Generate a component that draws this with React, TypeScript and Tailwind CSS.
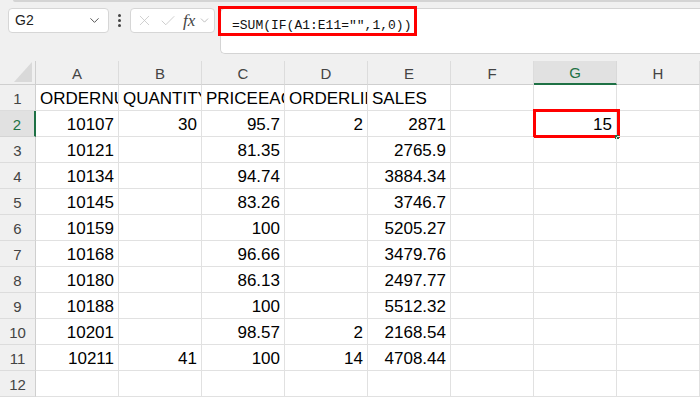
import { ChevronDown, X, Check } from "lucide-react";

// Sheet data, 12 rows x 8 columns (A..H)
const COLS = ["A", "B", "C", "D", "E", "F", "G", "H"];

type Cell = string | number | "";

const ROWS: Cell[][] = [
  ["ORDERNUMBER", "QUANTITYORDERED", "PRICEEACH", "ORDERLINENUMBER", "SALES", "", "", ""],
  [10107, 30, 95.7, 2, 2871, "", 15, ""],
  [10121, "", 81.35, "", 2765.9, "", "", ""],
  [10134, "", 94.74, "", 3884.34, "", "", ""],
  [10145, "", 83.26, "", 3746.7, "", "", ""],
  [10159, "", 100, "", 5205.27, "", "", ""],
  [10168, "", 96.66, "", 3479.76, "", "", ""],
  [10180, "", 86.13, "", 2497.77, "", "", ""],
  [10188, "", 100, "", 5512.32, "", "", ""],
  [10201, "", 98.57, 2, 2168.54, "", "", ""],
  [10211, 41, 100, 14, 4708.44, "", "", ""],
  ["", "", "", "", "", "", "", ""],
];

function FormulaBar() {
  return (
    <div className="relative h-[61px] bg-[#f0f0f0]">
      <div className="ml-[13px] h-[2px] bg-[#d4d4d4] rounded-bl" />
      <div className="flex items-start pt-[6px] pl-[8px]">
        {/* name box */}
        <div className="flex items-center justify-between w-[101px] h-[25px] bg-white border border-[#d6d6d6] rounded-[4px] pl-[6px] pr-[6px]">
          <span className="text-[14px] text-[#222]">G2</span>
          <ChevronDown size={15} strokeWidth={1.6} className="text-[#555]" />
        </div>
        {/* vertical dots */}
        <div className="flex flex-col items-center justify-center gap-[2px] w-[21px] h-[25px]">
          <span className="w-[3px] h-[3px] bg-[#444] rounded-full" />
          <span className="w-[3px] h-[3px] bg-[#444] rounded-full" />
          <span className="w-[3px] h-[3px] bg-[#444] rounded-full" />
        </div>
        {/* cancel / enter / fx */}
        <div className="flex items-center w-[85px] h-[25px] bg-white border border-[#d6d6d6] rounded-[4px] pl-[5px]">
          <X size={17} strokeWidth={1.1} className="text-[#c4c4c4]" />
          <Check size={18} strokeWidth={1.1} className="text-[#c4c4c4] ml-[6px]" />
          <span className="ml-[6px] font-['Liberation_Serif',serif] italic text-[17px] leading-none text-[#444]">
            fx
          </span>
          <ChevronDown size={13} strokeWidth={1.4} className="text-[#aaa] ml-[3px]" />
        </div>
        {/* formula input */}
        <div className="ml-[5px] flex-1 h-[46px] bg-white border-t border-b border-l border-[#d4d4d4] rounded-l-[5px] pt-[3px] pl-[11px]">
          <span className="font-['Liberation_Mono',monospace] text-[13px] text-[#111]">
            =SUM(IF(A1:E11="",1,0))
          </span>
        </div>
      </div>
      {/* annotation box */}
      <div className="absolute left-[218px] top-[6px] w-[199px] h-[30px] border-[3px] border-[#ff0000]" />
    </div>
  );
}

export default function App() {
  return (
    <div className="w-[700px] h-[398px] overflow-hidden bg-white font-['Liberation_Sans',Arial,sans-serif]">
      <FormulaBar />

      <div className="grid grid-cols-[36px_repeat(8,83px)]">
        {/* corner */}
        <div className="relative h-[24px] bg-[#f0f0f0] border-r border-b border-[#cfcfcf]">
          <div className="absolute right-[3px] bottom-[2px] w-0 h-0 border-l-[18px] border-l-transparent border-b-[20px] border-b-[#d9d9d9]" />
        </div>
        {COLS.map((c) =>
          c === "G" ? (
            <div
              key={c}
              className="h-[24px] flex items-center justify-center pt-[3px] bg-[#e1e1e1] border-r border-[#d9d9d9] border-b-2 border-b-[#1e7145] text-[15px] text-[#1e7145]"
            >
              {c}
            </div>
          ) : (
            <div
              key={c}
              className="h-[24px] flex items-center justify-center pt-[3px] bg-[#f0f0f0] border-r border-b border-r-[#dcdcdc] border-b-[#cfcfcf] text-[15px] text-[#444]"
            >
              {c}
            </div>
          )
        )}

        {ROWS.map((row, r) => (
          <Row key={r} index={r + 1} cells={row} />
        ))}
      </div>
    </div>
  );
}

function Row({ index, cells }: { index: number; cells: Cell[] }) {
  const selected = index === 2;
  return (
    <>
      <div
        className={
          selected
            ? "h-[26px] flex items-center justify-center pt-[3px] bg-[#e1e1e1] border-r-2 border-r-[#1e7145] border-b border-b-[#d4d4d4] text-[15px] text-[#1e7145]"
            : "h-[26px] flex items-center justify-center pt-[3px] bg-[#f0f0f0] border-r border-b border-r-[#cfcfcf] border-b-[#dcdcdc] text-[15px] text-[#444]"
        }
      >
        {index}
      </div>
      {cells.map((v, c) => {
        const isNum = typeof v === "number";
        const isSel = selected && c === 6;
        return (
          <div
            key={c}
            className={`relative h-[26px] flex items-center border-r border-b border-[#e1e1e1] pt-[3px] px-[4px] text-[17px] text-black whitespace-nowrap ${
              isNum ? "justify-end" : "justify-start"
            } ${isSel ? "overflow-visible" : "overflow-hidden"}`}
          >
            {v}
            {isSel && (
              <>
                <div className="absolute -left-[1px] -top-[2px] w-[87px] h-[29px] border-[3px] border-[#ff0000]" />
                <div className="absolute right-[-3px] bottom-[-3px] w-[4px] h-[4px] bg-[#1e7145]" />
              </>
            )}
          </div>
        );
      })}
    </>
  );
}
